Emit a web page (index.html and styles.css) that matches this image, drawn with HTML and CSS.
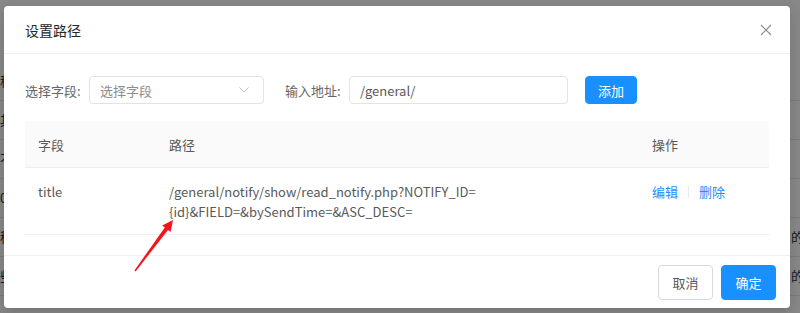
FILE: index.html
```html
<!DOCTYPE html>
<html lang="zh-CN">
<head>
    <meta charset="UTF-8">
    <meta name="viewport" content="width=device-width, initial-scale=1.0">
    <title>设置路径</title>
    <link rel="stylesheet" href="styles.css">
</head>
<body>
    <!-- 背景页面 -->
    <div class="page">
        <div class="page-row"><span>称</span><span></span></div>
        <div class="page-row"><span>其</span><span></span></div>
        <div class="page-row"><span>不</span><span></span></div>
        <div class="page-row"><span>0</span><span></span></div>
        <div class="page-row"><span>移</span><span>的</span></div>
        <div class="page-row"><span>些</span><span>的</span></div>
    </div>
    <div class="mask"></div>

    <div class="modal">
        <div class="modal-header">
            <span class="modal-title">设置路径</span>
            <svg class="modal-close" width="12" height="12" viewBox="0 0 12 12">
                <path d="M1 1L11 11M11 1L1 11" stroke="#8c8c8c" stroke-width="1.2" fill="none"/>
            </svg>
        </div>

        <div class="modal-body">
            <div class="form-row">
                <label class="form-label">选择字段:</label>
                <div class="select">
                    <span class="placeholder">选择字段</span>
                    <svg width="12" height="8" viewBox="0 0 12 8">
                        <path d="M1.5 1.5L6 6L10.5 1.5" stroke="#bfbfbf" stroke-width="1" fill="none"/>
                    </svg>
                </div>
                <label class="form-label second">输入地址:</label>
                <input class="input" type="text" value="/general/">
                <button class="btn btn-primary btn-add">添加</button>
            </div>

            <table class="table">
                <thead>
                    <tr>
                        <th class="col-field">字段</th>
                        <th>路径</th>
                        <th class="col-action">操作</th>
                    </tr>
                </thead>
                <tbody>
                    <tr>
                        <td>title</td>
                        <td>/general/notify/show/read_notify.php?NOTIFY_ID=<br>{id}&amp;FIELD=&amp;bySendTime=&amp;ASC_DESC=</td>
                        <td>
                            <a class="link">编辑</a><span class="divider"></span><a class="link">删除</a>
                        </td>
                    </tr>
                </tbody>
            </table>
        </div>

        <div class="modal-footer">
            <button class="btn">取消</button>
            <button class="btn btn-primary">确定</button>
        </div>
    </div>

    <svg class="arrow" width="800" height="313" viewBox="0 0 800 313">
        <polygon points="134.4,270.5 164.8,227.6 162.2,225.6 173,220 170.6,232 168,230 135.6,271.5" fill="#f5141e"/>
    </svg>
</body>
</html>
```

FILE: styles.css
```css
body {
    margin: 0;
    font-family: "Noto Sans CJK SC", "Liberation Sans", sans-serif;
    font-size: 13px;
    color: #595959;
    background-color: #fff;
    width: 800px;
    height: 313px;
    overflow: hidden;
    position: relative;
}
.page {
    padding-top: 62px;
}
.page-row {
    display: flex;
    justify-content: space-between;
    height: 38px;
    line-height: 38px;
    border-bottom: 1px solid #e8e8e8;
    color: #333;
}
.page-row span:last-child {
    margin-right: -4px;
}
.mask {
    position: absolute;
    inset: 0;
    background-color: rgba(0, 0, 0, 0.47);
}
.modal {
    position: absolute;
    left: 4px;
    top: 6px;
    width: 786px;
    height: 302px;
    background-color: #fff;
    border-radius: 4px;
    box-shadow: 0 4px 12px rgba(0, 0, 0, 0.15);
    display: flex;
    flex-direction: column;
}
.modal-header {
    height: 47px;
    border-bottom: 1px solid #efefef;
    display: flex;
    align-items: center;
    justify-content: space-between;
    padding: 0 18px 0 21px;
}
.modal-title {
    font-size: 14px;
    color: #262626;
}
.modal-body {
    flex: 1;
    padding: 22px 21px 0;
}
.form-row {
    display: flex;
    align-items: center;
    height: 28px;
}
.form-label {
    color: #666;
    margin-right: 8px;
    width: 56px;
}
.form-label.second {
    margin-left: 21px;
}
.select {
    box-sizing: border-box;
    width: 175px;
    height: 28px;
    border: 1px solid #e3e3e3;
    border-radius: 4px;
    display: flex;
    align-items: center;
    justify-content: space-between;
    padding: 0 13px 0 10px;
}
.placeholder {
    color: #8c8c8c;
}
.input {
    box-sizing: border-box;
    width: 219px;
    height: 28px;
    border: 1px solid #e3e3e3;
    border-radius: 4px;
    padding: 0 10px;
    font-family: inherit;
    font-size: 13px;
    color: #595959;
    outline: none;
}
.btn {
    box-sizing: border-box;
    height: 35px;
    width: 55px;
    border: 1px solid #d9d9d9;
    border-radius: 4px;
    background-color: #fff;
    color: #595959;
    font-family: inherit;
    font-size: 13px;
    padding: 0;
}
.btn-primary {
    background-color: #1890ff;
    border-color: #1890ff;
    color: #fff;
}
.btn-add {
    height: 28px;
    width: 52px;
    margin-left: 17px;
}
.table {
    width: 100%;
    margin-top: 17px;
    border-collapse: collapse;
}
.table th {
    background-color: #fafafa;
    font-weight: normal;
    text-align: left;
    height: 46px;
    padding: 0 13px;
    border-bottom: 1px solid #efefef;
    color: #595959;
}
.table td {
    padding: 14px 13px 12px;
    line-height: 20px;
    vertical-align: top;
    border-bottom: 1px solid #efefef;
}
.table .col-field {
    width: 105px;
}
.table .col-action {
    width: 104px;
}
.link {
    color: #1890ff;
}
.divider {
    display: inline-block;
    width: 1px;
    height: 12px;
    background-color: #e8e8e8;
    margin: 0 10px;
    vertical-align: -1px;
}
.modal-footer {
    border-top: 1px solid #efefef;
    display: flex;
    justify-content: flex-end;
    gap: 8px;
    padding: 9px 14px 0;
    height: 43px;
}
.arrow {
    position: absolute;
    left: 0;
    top: 0;
}
```
